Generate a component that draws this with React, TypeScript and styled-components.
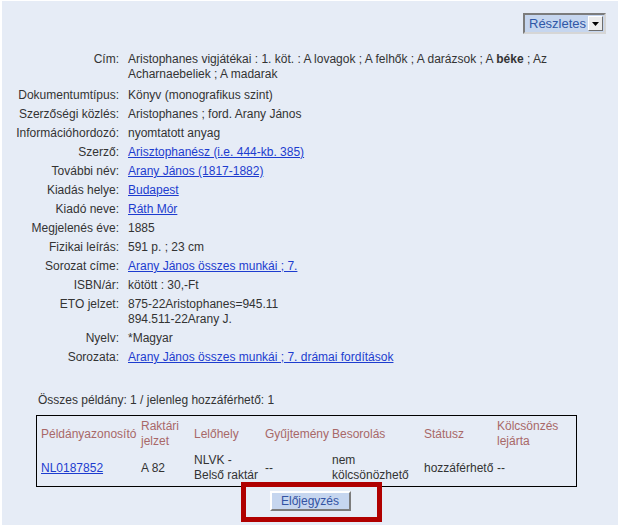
import React from "react";
import styled, { createGlobalStyle } from "styled-components";

const GlobalStyle = createGlobalStyle`
  body {
    margin: 0;
    background: #ffffff;
    font-family: "Liberation Sans", Arial, sans-serif;
    font-size: 12px;
    color: #333333;
  }
`;

type DetailRow = {
  label: string;
  value: React.ReactNode;
  link?: boolean;
};

const details: DetailRow[] = [
  {
    label: "Dokumentumtípus",
    value: "Könyv (monografikus szint)",
  },
  { label: "Szerzőségi közlés", value: "Aristophanes ; ford. Arany János" },
  { label: "Információhordozó", value: "nyomtatott anyag" },
  { label: "Szerző", value: "Arisztophanész (i.e. 444-kb. 385)", link: true },
  { label: "További név", value: "Arany János (1817-1882)", link: true },
  { label: "Kiadás helye", value: "Budapest", link: true },
  { label: "Kiadó neve", value: "Ráth Mór", link: true },
  { label: "Megjelenés éve", value: "1885" },
  { label: "Fizikai leírás", value: "591 p. ; 23 cm" },
  { label: "Sorozat címe", value: "Arany János összes munkái ; 7.", link: true },
  { label: "ISBN/ár", value: "kötött : 30,-Ft" },
  {
    label: "ETO jelzet",
    value: (
      <>
        875-22Aristophanes=945.11
        <br />
        894.511-22Arany J.
      </>
    ),
  },
  { label: "Nyelv", value: "*Magyar" },
  {
    label: "Sorozata",
    value: "Arany János összes munkái ; 7. drámai fordítások",
    link: true,
  },
];

const headers: React.ReactNode[] = [
  "Példányazonosító",
  <>
    Raktári
    <br />
    jelzet
  </>,
  "Lelőhely",
  "Gyűjtemény",
  "Besorolás",
  "Státusz",
  <>
    Kölcsönzés
    <br />
    lejárta
  </>,
];

export default function App() {
  return (
    <>
      <GlobalStyle />
      <Panel>
        <Toolbar>
          <SelectBox>
            <SelectValue>Részletes</SelectValue>
            <SelectArrow>
              <svg width="7" height="4" viewBox="0 0 7 4">
                <polygon points="0,0 7,0 3.5,4" fill="#000" />
              </svg>
            </SelectArrow>
          </SelectBox>
        </Toolbar>

        <Details>
          <Label $extra>Cím:</Label>
          <Value $extra>
            Aristophanes vigjátékai : 1. köt. : A lovagok ; A felhők ; A
            darázsok ; A <b>béke</b> ; Az Acharnaebeliek ; A madarak
          </Value>
          {details.map((row) => (
            <React.Fragment key={row.label}>
              <Label>{row.label}:</Label>
              <Value>{row.link ? <Link href="#">{row.value}</Link> : row.value}</Value>
            </React.Fragment>
          ))}
        </Details>

        <Holdings>
          <Summary>Összes példány: 1 / jelenleg hozzáférhető: 1</Summary>
          <CopyTable>
            {headers.map((h, i) => (
              <HeadCell key={i}>{h}</HeadCell>
            ))}
            <Cell>
              <Link href="#">NL0187852</Link>
            </Cell>
            <Cell>A 82</Cell>
            <Cell>
              NLVK -
              <br />
              Belső raktár
            </Cell>
            <Cell>--</Cell>
            <Cell>
              nem
              <br />
              kölcsönözhető
            </Cell>
            <Cell>hozzáférhető</Cell>
            <Cell>--</Cell>
          </CopyTable>
        </Holdings>

        <ButtonRow>
          <ButtonWrap>
            <ReserveButton>Előjegyzés</ReserveButton>
            <Highlight />
          </ButtonWrap>
        </ButtonRow>
      </Panel>
    </>
  );
}

const Panel = styled.div`
  margin: 1px 0 0 2px;
  width: 616px;
  height: 524px;
  box-sizing: border-box;
  background: #e6ecf6;
  padding-top: 12px;
`;

const Toolbar = styled.div`
  display: flex;
  justify-content: flex-end;
  padding-right: 12px;
`;

const SelectBox = styled.div`
  display: flex;
  align-items: center;
  width: 83px;
  height: 21px;
  box-sizing: border-box;
  border: 2px solid;
  border-color: #7c7c7c #d6d6d6 #d6d6d6 #7c7c7c;
  background: #c6d6ef;
`;

const SelectValue = styled.span`
  flex: 1;
  padding-left: 4px;
  font-size: 13px;
  color: #2f57a6;
  line-height: 17px;
`;

const SelectArrow = styled.span`
  display: flex;
  align-items: center;
  justify-content: center;
  width: 15px;
  height: 15px;
  margin-right: 1px;
  box-sizing: border-box;
  background: #ececec;
  border: 1px solid;
  border-color: #ffffff #6e6e6e #6e6e6e #ffffff;
`;

const Details = styled.div`
  display: grid;
  grid-template-columns: 117px 460px;
  column-gap: 9px;
  row-gap: 4px;
  margin-top: 18px;
  line-height: 15px;
`;

const Label = styled.div<{ $extra?: boolean }>`
  text-align: right;
  white-space: nowrap;
  margin-bottom: ${(p) => (p.$extra ? "2px" : "0")};
`;

const Value = styled.div<{ $extra?: boolean }>`
  margin-bottom: ${(p) => (p.$extra ? "2px" : "0")};

  b {
    font-weight: bold;
  }
`;

const Link = styled.a`
  color: #1d3ccf;
  text-decoration: underline;
`;

const Holdings = styled.div`
  margin: 28px 0 0 34px;
`;

const Summary = styled.div`
  padding-left: 2px;
  line-height: 15px;
  margin-bottom: 7px;
`;

const CopyTable = styled.div`
  display: grid;
  grid-template-columns: 98px 51px 69px 65px 90px 71px 79px;
  column-gap: 2px;
  row-gap: 2px;
  width: 541px;
  box-sizing: border-box;
  padding: 2px;
  border: 1px solid #000000;
  line-height: 15px;
`;

const HeadCell = styled.div`
  display: flex;
  align-items: center;
  min-height: 30px;
  padding: 1px 2px;
  color: #a86868;
  white-space: nowrap;
`;

const Cell = styled.div`
  display: flex;
  align-items: center;
  min-height: 30px;
  padding: 1px 2px;
  white-space: nowrap;
`;

const ButtonRow = styled.div`
  display: flex;
  justify-content: center;
  margin-top: 4px;
`;

const ButtonWrap = styled.div`
  position: relative;
  display: inline-flex;
`;

const ReserveButton = styled.button`
  width: 81px;
  height: 20px;
  padding: 0;
  box-sizing: border-box;
  background: #c6d6ef;
  border: 2px solid;
  border-color: #ffffff #7c7c7c #7c7c7c #ffffff;
  font-family: "Liberation Sans", Arial, sans-serif;
  font-size: 12px;
  color: #3353a3;
  cursor: pointer;
`;

const Highlight = styled.div`
  position: absolute;
  top: -9px;
  left: -29px;
  right: -31px;
  bottom: -11px;
  border: 5px solid #b00000;
  pointer-events: none;
`;
